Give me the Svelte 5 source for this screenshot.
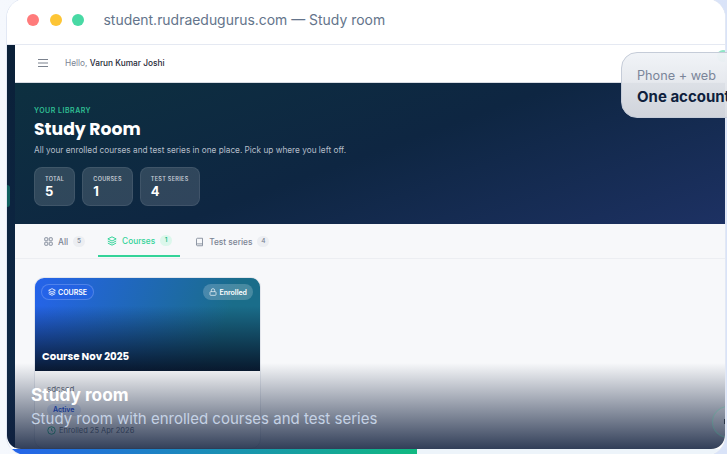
<script>
  const stats = [
    { label: 'TOTAL', value: 5 },
    { label: 'COURSES', value: 1 },
    { label: 'TEST SERIES', value: 4 }
  ];
</script>

<div class="stage">
  <div class="frame">
    <div class="window">
      <header class="chrome">
        <span class="dot red"></span>
        <span class="dot yellow"></span>
        <span class="dot green"></span>
        <span class="url">student.rudraedugurus.com — Study room</span>
      </header>

      <div class="app">
        <aside class="rail"><span class="rail-mark"></span></aside>
        <main class="content">
          <div class="topbar">
            <svg class="menu" viewBox="0 0 12 10" width="12" height="10">
              <path d="M1 1.500h10M1 5h10M1 8.500h10" stroke="#7b828e" stroke-width="1.100" fill="none" />
            </svg>
            <span class="hello">Hello, <b>Varun Kumar Joshi</b></span>
            <span class="avatar"></span>
          </div>

          <section class="hero">
            <div class="eyebrow">YOUR LIBRARY</div>
            <h1>Study Room</h1>
            <p>All your enrolled courses and test series in one place. Pick up where you left off.</p>
            <div class="stats">
              {#each stats as s}
                <div class="stat">
                  <span class="stat-label">{s.label}</span>
                  <span class="stat-value">{s.value}</span>
                </div>
              {/each}
            </div>
          </section>

          <nav class="tabs">
            <div class="tab">
              <svg viewBox="0 0 12 12" width="9" height="9" fill="none" stroke="#7b8494" stroke-width="1.200">
                <rect x="1" y="1" width="4" height="4" rx=".6" /><rect x="7" y="1" width="4" height="4" rx=".6" />
                <rect x="1" y="7" width="4" height="4" rx=".6" /><rect x="7" y="7" width="4" height="4" rx=".6" />
              </svg>
              All <span class="count">5</span>
            </div>
            <div class="tab active">
              <svg viewBox="0 0 12 12" width="10" height="10" fill="none" stroke="#34d399" stroke-width="1.200">
                <path d="M6 1 11 3.500 6 6 1 3.500Z" /><path d="M1 6l5 2.500 5-2.500" /><path d="M1 8.500 6 11l5-2.500" />
              </svg>
              Courses <span class="count">1</span>
            </div>
            <div class="tab">
              <svg viewBox="0 0 12 12" width="9" height="10" fill="none" stroke="#7b8494" stroke-width="1.100">
                <path d="M2 2.200C2 1.500 2.500 1 3.200 1H10v10H3.200C2.500 11 2 10.500 2 9.800Z" /><path d="M2 9.500C2 8.800 2.500 8.500 3.200 8.500H10" />
              </svg>
              Test series <span class="count">4</span>
            </div>
          </nav>

          <div class="grid">
            <article class="card">
              <div class="card-top">
                <div class="badges">
                  <span class="pill course">
                    <svg viewBox="0 0 12 12" width="8" height="8" fill="none" stroke="#fff" stroke-width="1.200">
                      <path d="M6 1 11 3.500 6 6 1 3.500Z" /><path d="M1 6l5 2.500 5-2.500" /><path d="M1 8.500 6 11l5-2.500" />
                    </svg>
                    COURSE
                  </span>
                  <span class="pill enrolled">
                    <svg viewBox="0 0 12 12" width="8" height="8" fill="none" stroke="#fff" stroke-width="1">
                      <rect x="1.500" y="5.500" width="9" height="5.500" rx="1.200" /><path d="M3.500 5.500V3.500a2.500 2.500 0 0 1 5 0v2" />
                    </svg>
                    Enrolled
                  </span>
                </div>
                <h2>Course Nov 2025</h2>
              </div>
              <div class="card-body">
                <div class="desc">sdcscd</div>
                <span class="active-tag">Active</span>
                <div class="meta">
                  <svg viewBox="0 0 12 12" width="9" height="9" fill="none" stroke="#10b981" stroke-width="1.100">
                    <circle cx="6" cy="6" r="5" /><path d="M6 3v3l2 1" />
                  </svg>
                  Enrolled 25 Apr 2026
                </div>
              </div>
            </article>
          </div>
        </main>
      </div>

      <div class="caption">
        <div class="cap-title">Study room</div>
        <div class="cap-sub">Study room with enrolled courses and test series</div>
      </div>
      <div class="fab"><span></span></div>
    </div>

    <div class="track"><div class="fill"></div></div>
  </div>

  <div class="float">
    <div class="float-sm">Phone + web</div>
    <div class="float-lg">One account</div>
  </div>
</div>

<style>
  :global(body) {
    margin: 0;
  }
  .stage {
    position: relative;
    width: 727px;
    height: 454px;
    overflow: hidden;
    font-family: Inter, "Liberation Sans", sans-serif;
    background: linear-gradient(90deg, #f5f8fd, #d9e3f8);
  }
  .frame {
    width: 720px;
    height: 458px;
    margin: -2px 0 0 6px;
    box-sizing: border-box;
    border: 1px solid #e2e8f4;
    border-radius: 20px;
    background: #fff;
    overflow: hidden;
    display: flex;
    flex-direction: column;
  }
  .window {
    position: relative;
    height: 450px;
    flex: none;
    border-radius: 0 0 14px 14px;
    overflow: hidden;
    display: flex;
    flex-direction: column;
    background: #fff;
  }
  .track {
    flex: 1;
    background: #edf4fa;
  }
  .fill {
    width: 410px;
    height: 100%;
    background: linear-gradient(90deg, #2563eb, #10b981);
  }
  .chrome {
    height: 46px;
    flex: none;
    display: flex;
    align-items: center;
    padding: 0 0 4px 20px;
    gap: 10.500px;
    background: #fff;
    border-bottom: 1px solid #e5e9f2;
    box-sizing: border-box;
  }
  .dot {
    width: 12px;
    height: 12px;
    border-radius: 50%;
  }
  .red { background: #ff7b7b; }
  .yellow { background: #fdc535; }
  .green { background: #48d9a4; }
  .url {
    margin-left: 9px;
    font-size: 13.950px;
    color: #64748b;
  }
  .app {
    flex: 1;
    display: flex;
    min-height: 0;
  }
  .rail {
    width: 8px;
    flex: none;
    padding-top: 140px;
    box-sizing: border-box;
    background: linear-gradient(180deg, #0a2038, #0f2a4a);
  }
  .rail-mark {
    display: block;
    width: 3px;
    height: 22px;
    border-radius: 0 3px 3px 0;
    background: #0f5f5f;
  }
  .content {
    flex: 1;
    min-width: 0;
    background: #f7f8fa;
  }
  .topbar {
    height: 38px;
    box-sizing: border-box;
    background: #fff;
    border-bottom: 1px solid #d8dce3;
    display: flex;
    align-items: center;
    padding: 0 0 2px 22px;
    gap: 16px;
    position: relative;
    overflow: hidden;
  }
  .avatar {
    position: absolute;
    right: -4px;
    top: 5px;
    width: 12px;
    height: 12px;
    border-radius: 50%;
    background: #8fe6c6;
  }
  .hello {
    font-size: 8.300px;
    color: #7b8494;
  }
  .hello b {
    font-weight: 500;
    color: #1f2937;
  }
  .hero {
    height: 141px;
    box-sizing: border-box;
    padding: 24px 19px 0;
    background: linear-gradient(160deg, #0d3040 0%, #0e2642 50%, #1d3163 100%);
    color: #fff;
  }
  .eyebrow {
    font-size: 7px;
    font-weight: 600;
    letter-spacing: .5px;
    color: #2fbf93;
    line-height: 8px;
  }
  h1 {
    margin: 2px 0 0;
    font-family: Poppins, Inter, sans-serif;
    font-size: 17.200px;
    font-weight: 700;
    line-height: 24px;
  }
  .hero p {
    margin: 4px 0 0;
    font-size: 8.250px;
    line-height: 11px;
    color: #b6bfca;
  }
  .stats {
    margin-top: 11px;
    display: flex;
    gap: 7px;
  }
  .stat {
    height: 39px;
    box-sizing: border-box;
    padding: 7px 10px;
    border-radius: 8px;
    background: rgba(255, 255, 255, .14);
    border: 1px solid rgba(255, 255, 255, .08);
    display: flex;
    flex-direction: column;
  }
  .stat-label {
    font-size: 5.500px;
    font-weight: 600;
    letter-spacing: .3px;
    color: #c3cad4;
    line-height: 8px;
  }
  .stat-value {
    font-size: 13px;
    font-weight: 700;
    line-height: 16px;
  }
  .tabs {
    height: 35px;
    box-sizing: border-box;
    display: flex;
    padding-left: 19px;
    gap: 5px;
    border-bottom: 1px solid #eceef2;
    background: #f7f8fa;
  }
  .tab {
    display: flex;
    align-items: center;
    gap: 0;
    padding: 2px 8px 0 10px;
    font-size: 8.300px;
    font-weight: 500;
    color: #7b8494;
    height: 33px;
    box-sizing: border-box;
  }
  .tab svg {
    margin-right: 5px;
  }
  .tab.active {
    color: #34d399;
    border-bottom: 2px solid #34d399;
    padding-left: 9px;
  }
  .count {
    margin-left: 5px;
    min-width: 12px;
    height: 11px;
    line-height: 11px;
    border-radius: 6px;
    background: #eceef2;
    font-size: 6.500px;
    text-align: center;
  }
  .active .count {
    background: #dcf7ec;
    color: #10b981;
  }
  .grid {
    padding: 18px 19px 0;
  }
  .card {
    width: 227px;
    border-radius: 10px;
    overflow: hidden;
    background: #fff;
    border: 1px solid #e3e6ec;
    box-sizing: border-box;
  }
  .card-top {
    height: 93px;
    box-sizing: border-box;
    padding: 6px 7px 7px 6px;
    display: flex;
    flex-direction: column;
    justify-content: space-between;
    background:
      linear-gradient(180deg, rgba(7, 20, 40, 0) 30%, rgba(7, 20, 40, .95) 100%),
      linear-gradient(110deg, #2563eb 0%, #1a6d8a 80%);
    color: #fff;
  }
  .badges {
    display: flex;
    justify-content: space-between;
  }
  .pill {
    display: inline-flex;
    align-items: center;
    gap: 2px;
    height: 16px;
    padding: 0 6px;
    border-radius: 8px;
    font-size: 7px;
    font-weight: 600;
    box-sizing: border-box;
  }
  .course {
    background: rgba(37, 99, 235, .6);
    border: 1px solid rgba(255, 255, 255, .2);
  }
  .enrolled {
    background: rgba(255, 255, 255, .2);
  }
  h2 {
    margin: 0 0 0 1px;
    font-family: Poppins, Inter, sans-serif;
    font-size: 10.200px;
    font-weight: 700;
    line-height: 14px;
  }
  .card-body {
    padding: 13px 12px;
  }
  .desc {
    font-size: 8px;
    color: #6b7280;
    line-height: 11px;
  }
  .active-tag {
    display: inline-block;
    margin-top: 9px;
    padding: 0 6px;
    border-radius: 7px;
    background: #e3ebfb;
    color: #1d4ed8;
    font-size: 7px;
    font-weight: 600;
    line-height: 12px;
  }
  .meta {
    display: flex;
    align-items: center;
    gap: 3px;
    margin-top: 10px;
    font-size: 7.500px;
    color: #6b7280;
  }
  .caption {
    position: absolute;
    left: 0;
    right: 0;
    bottom: 0;
    height: 86px;
    box-sizing: border-box;
    padding: 21px 0 0 24px;
    background: linear-gradient(180deg, rgba(15, 30, 60, 0) 0%, rgba(15, 30, 60, .85) 100%);
  }
  .cap-title {
    font-size: 17.300px;
    font-weight: 700;
    line-height: 22px;
    color: #fff;
  }
  .cap-sub {
    margin-top: 3px;
    font-size: 15px;
    line-height: 20px;
    color: #c5d2e5;
  }
  .fab {
    position: absolute;
    left: 705px;
    bottom: 11px;
    width: 32px;
    height: 32px;
    box-sizing: border-box;
    border-radius: 50%;
    background: rgba(255, 255, 255, .05);
    border: 1px solid rgba(16, 185, 129, .22);
  }
  .fab span {
    position: absolute;
    left: 11px;
    top: 12px;
    width: 2px;
    height: 5px;
    background: #2a3345;
  }
  .float {
    position: absolute;
    left: 621px;
    top: 52px;
    width: 130px;
    height: 66px;
    box-sizing: border-box;
    padding: 14px 15px;
    border-radius: 16px;
    background: linear-gradient(180deg, rgba(240, 243, 247, .96), rgba(216, 219, 225, .96));
    border: 1px solid #c5ccd8;
  }
  .float-sm {
    font-size: 12.700px;
    line-height: 17px;
    color: #7a8599;
  }
  .float-lg {
    margin-top: 3px;
    font-size: 15px;
    font-weight: 700;
    line-height: 20px;
    color: #0f1f3d;
  }
</style>
